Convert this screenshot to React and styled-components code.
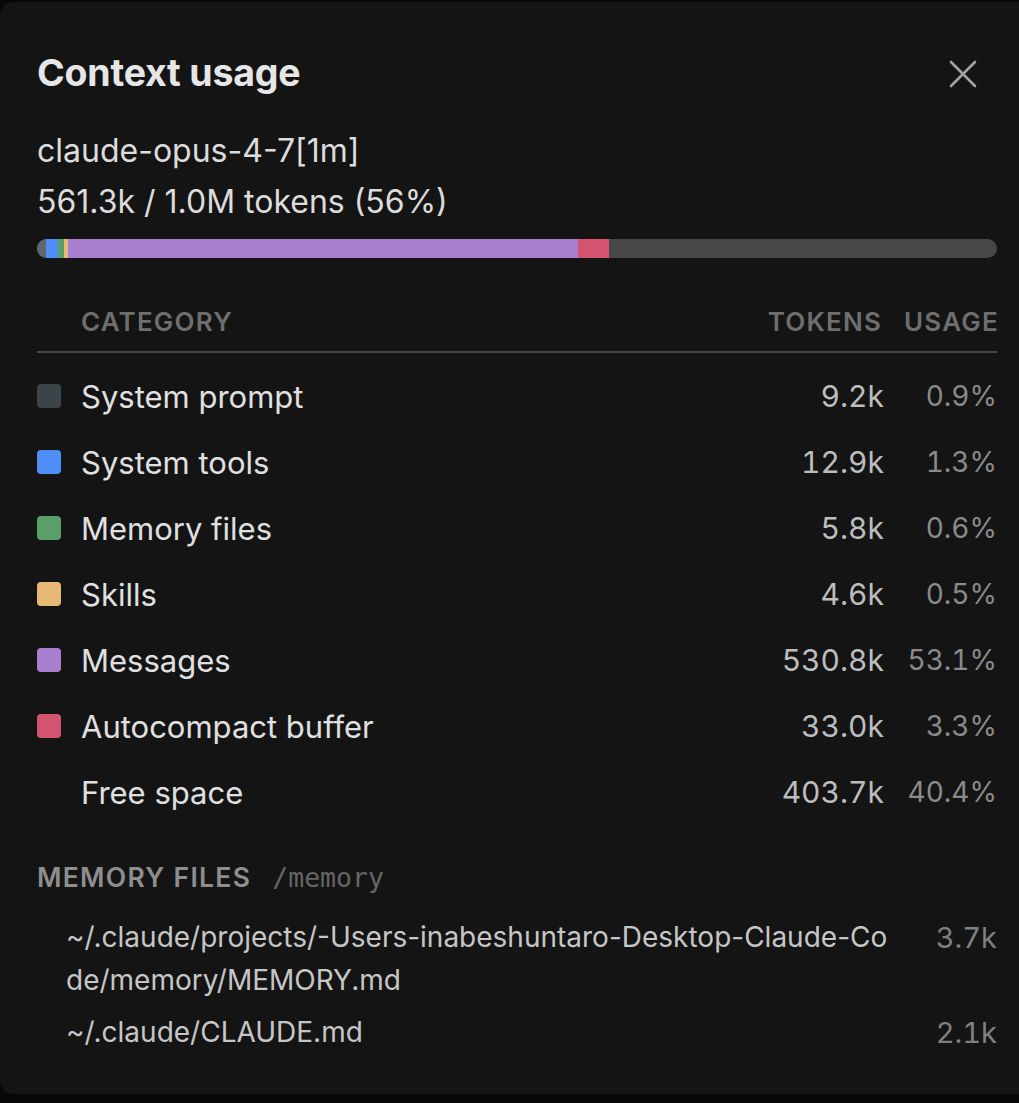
import React from "react";
import styled, { createGlobalStyle } from "styled-components";
import { X } from "lucide-react";

const CATEGORIES = [
  { name: "System prompt", tokens: "9.2k", usage: "0.9%", swatch: "#3a4449", bar: "#5d686c", pct: 0.92 },
  { name: "System tools", tokens: "12.9k", usage: "1.3%", swatch: "#4f8ef7", bar: "#4f8ef7", pct: 1.29 },
  { name: "Memory files", tokens: "5.8k", usage: "0.6%", swatch: "#5a9e6a", bar: "#5a9e6a", pct: 0.58 },
  { name: "Skills", tokens: "4.6k", usage: "0.5%", swatch: "#e8b877", bar: "#e8b877", pct: 0.46 },
  { name: "Messages", tokens: "530.8k", usage: "53.1%", swatch: "#a97fcf", bar: "#a97fcf", pct: 53.08 },
  { name: "Autocompact buffer", tokens: "33.0k", usage: "3.3%", swatch: "#d4546f", bar: "#d4546f", pct: 3.3 },
  { name: "Free space", tokens: "403.7k", usage: "40.4%", swatch: null, bar: null, pct: 40.37 },
];

const MEMORY_FILES = [
  { path: "~/.claude/projects/-Users-inabeshuntaro-Desktop-Claude-Code/memory/MEMORY.md", tokens: "3.7k" },
  { path: "~/.claude/CLAUDE.md", tokens: "2.1k" },
];

const GlobalStyle = createGlobalStyle`
  html, body {
    margin: 0;
    padding: 0;
    background: #070707;
    overflow: hidden;
  }
  body {
    font-family: Inter, "Noto Sans", sans-serif;
    -webkit-font-smoothing: antialiased;
  }
`;

const Page = styled.div`
  padding-top: 2px;
  height: 1103px;
  box-sizing: border-box;
`;

const Panel = styled.section`
  width: 1034px;
  box-sizing: border-box;
  padding: 49px 37px 40px 37px;
  background: #141414;
  border-radius: 14px;
  color: #e2e2e2;
`;

const Header = styled.header`
  display: flex;
  align-items: center;
  justify-content: space-between;
  height: 43px;
`;

const Title = styled.h1`
  margin: 0;
  font-size: 37.5px;
  line-height: 43px;
  font-weight: 700;
  color: #e6e6e6;
  letter-spacing: -0.2px;
`;

const CloseButton = styled.button`
  display: flex;
  align-items: center;
  justify-content: center;
  width: 48px;
  height: 48px;
  margin: 3px 10px 0 0;
  padding: 0;
  border: none;
  background: transparent;
  color: #a3a3a3;
  cursor: pointer;
`;

const InfoLine = styled.div`
  font-size: 32px;
  line-height: 51px;
  color: #dcdcdc;
  margin-top: ${(props) => (props.first ? "31px" : "0")};
`;

const Bar = styled.div`
  display: flex;
  height: 19px;
  margin-top: 12px;
  border-radius: 10px;
  overflow: hidden;
  background: #474747;
`;

const Segment = styled.div`
  flex: none;
  height: 100%;
  background: ${(props) => props.color};
`;

const Table = styled.div`
  margin-top: 49px;
`;

const TableHead = styled.div`
  display: grid;
  grid-template-columns: 24px 1fr 120px 93px;
  column-gap: 20px;
  padding-bottom: 14px;
  border-bottom: 2px solid #474747;
`;

const HeadCell = styled.div`
  grid-column: ${(props) => props.col};
  font-size: 26px;
  line-height: 30px;
  font-weight: 600;
  letter-spacing: 1.2px;
  text-transform: uppercase;
  color: #6e6e6e;
  text-align: ${(props) => (props.right ? "right" : "left")};
  white-space: nowrap;
  margin-right: ${(props) => (props.right ? "2px" : "0")};
`;

const Rows = styled.div`
  margin-top: 10px;
`;

const Row = styled.div`
  display: grid;
  grid-template-columns: 24px 1fr 120px 93px;
  column-gap: 20px;
  align-items: center;
  height: 66px;
`;

const Swatch = styled.span`
  width: 24px;
  height: 24px;
  border-radius: 4px;
  background: ${(props) => props.color || "transparent"};
`;

const Label = styled.span`
  font-size: 31px;
  color: #e0e0e0;
`;

const Tokens = styled.span`
  font-size: 30px;
  color: #bdbdbd;
  text-align: right;
  font-variant-numeric: tabular-nums;
`;

const Usage = styled.span`
  font-size: 28px;
  color: #8a8a8a;
  text-align: right;
  font-variant-numeric: tabular-nums;
`;

const MemorySection = styled.div`
  margin-top: 37px;
`;

const MemoryHead = styled.div`
  display: flex;
  align-items: baseline;
  gap: 21px;
  font-size: 26.5px;
  line-height: 30px;
  font-weight: 600;
  letter-spacing: 1.3px;
  color: #8e8e8e;
`;

const Command = styled.span`
  font-family: "DejaVu Sans Mono", "Liberation Mono", monospace;
  font-weight: 400;
  font-size: 26.5px;
  letter-spacing: 0;
  color: #666;
`;

const MemoryList = styled.div`
  display: flex;
  flex-direction: column;
  gap: 9px;
  margin-top: 23px;
  padding-left: 29px;
`;

const MemoryItem = styled.div`
  display: grid;
  grid-template-columns: 1fr auto;
  column-gap: 40px;
  align-items: start;
`;

const Path = styled.span`
  font-size: 28px;
  line-height: 43px;
  color: #c6c6c6;
  word-break: break-all;
`;

const FileTokens = styled.span`
  font-size: 29px;
  line-height: 43px;
  color: #808080;
  font-variant-numeric: tabular-nums;
`;

export default function App() {
  return (
    <>
      <GlobalStyle />
      <Page>
        <Panel>
          <Header>
            <Title>Context usage</Title>
            <CloseButton aria-label="Close">
              <X size={48} strokeWidth={1.3} />
            </CloseButton>
          </Header>

          <InfoLine first>claude-opus-4-7[1m]</InfoLine>
          <InfoLine>561.3k / 1.0M tokens (56%)</InfoLine>

          <Bar>
            {CATEGORIES.filter((c) => c.bar).map((c) => (
              <Segment key={c.name} color={c.bar} style={{ width: `${c.pct}%` }} />
            ))}
          </Bar>

          <Table>
            <TableHead>
              <HeadCell col={2}>Category</HeadCell>
              <HeadCell col={3} right>
                Tokens
              </HeadCell>
              <HeadCell col={4} right>
                Usage
              </HeadCell>
            </TableHead>
            <Rows>
              {CATEGORIES.map((c) => (
                <Row key={c.name}>
                  <Swatch color={c.swatch} />
                  <Label>{c.name}</Label>
                  <Tokens>{c.tokens}</Tokens>
                  <Usage>{c.usage}</Usage>
                </Row>
              ))}
            </Rows>
          </Table>

          <MemorySection>
            <MemoryHead>
              MEMORY FILES
              <Command>/memory</Command>
            </MemoryHead>
            <MemoryList>
              {MEMORY_FILES.map((f) => (
                <MemoryItem key={f.path}>
                  <Path>{f.path}</Path>
                  <FileTokens>{f.tokens}</FileTokens>
                </MemoryItem>
              ))}
            </MemoryList>
          </MemorySection>
        </Panel>
      </Page>
    </>
  );
}
